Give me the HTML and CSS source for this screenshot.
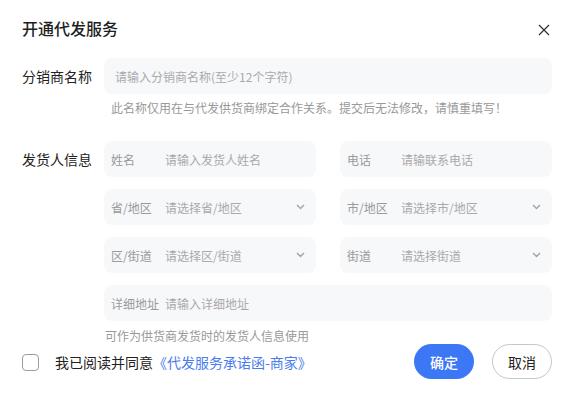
FILE: index.html
```html
<!DOCTYPE html>
<html lang="zh-CN">
<head>
<meta charset="utf-8">
<title>开通代发服务</title>
<link rel="stylesheet" href="styles.css">
</head>
<body>
<div class="dialog">
  <div class="header">
    <h1 class="title">开通代发服务</h1>
    <button class="close" aria-label="关闭">
      <svg width="12" height="12" viewBox="0 0 12 12"><path d="M1 1L11 11M11 1L1 11" stroke="#333" stroke-width="1.3" fill="none"/></svg>
    </button>
  </div>

  <div class="form-row">
    <div class="label">分销商名称</div>
    <div class="control">
      <div class="field field-name"><span class="placeholder">请输入分销商名称(至少12个字符)</span></div>
      <div class="hint hint-name">此名称仅用在与代发供货商绑定合作关系。提交后无法修改，请慎重填写！</div>
    </div>
  </div>

  <div class="form-row sender">
    <div class="label">发货人信息</div>
    <div class="control">
      <div class="grid">
        <div class="field"><span class="prefix">姓名</span><span class="placeholder">请输入发货人姓名</span></div>
        <div class="field"><span class="prefix">电话</span><span class="placeholder">请输联系电话</span></div>
        <div class="field select"><span class="prefix">省/地区</span><span class="placeholder">请选择省/地区</span><svg class="chev" width="9" height="6" viewBox="0 0 9 6"><path d="M1 1L4.5 4.5L8 1" stroke="#a6a6a6" stroke-width="1.5" fill="none"/></svg></div>
        <div class="field select"><span class="prefix">市/地区</span><span class="placeholder">请选择市/地区</span><svg class="chev" width="9" height="6" viewBox="0 0 9 6"><path d="M1 1L4.5 4.5L8 1" stroke="#a6a6a6" stroke-width="1.5" fill="none"/></svg></div>
        <div class="field select"><span class="prefix">区/街道</span><span class="placeholder">请选择区/街道</span><svg class="chev" width="9" height="6" viewBox="0 0 9 6"><path d="M1 1L4.5 4.5L8 1" stroke="#a6a6a6" stroke-width="1.5" fill="none"/></svg></div>
        <div class="field select"><span class="prefix">街道</span><span class="placeholder">请选择街道</span><svg class="chev" width="9" height="6" viewBox="0 0 9 6"><path d="M1 1L4.5 4.5L8 1" stroke="#a6a6a6" stroke-width="1.5" fill="none"/></svg></div>
        <div class="field wide"><span class="prefix">详细地址</span><span class="placeholder">请输入详细地址</span></div>
      </div>
      <div class="hint hint-addr">可作为供货商发货时的发货人信息使用</div>
    </div>
  </div>

  <div class="footer">
    <label class="agree">
      <span class="checkbox"></span>
      <span class="agree-text">我已阅读并同意<a class="link">《代发服务承诺函-商家》</a></span>
    </label>
    <div class="actions">
      <button class="btn btn-primary">确定</button>
      <button class="btn btn-default">取消</button>
    </div>
  </div>
</div>
</body>
</html>
```

FILE: styles.css
```css
* { box-sizing: border-box; }
html, body {
  margin: 0;
  padding: 0;
  background: #fff;
}
body {
  font-family: "PingFang SC", "Noto Sans CJK SC", "Noto Sans", sans-serif;
  color: #222;
  width: 576px;
  height: 408px;
  overflow: hidden;
}
.dialog {
  padding: 16px 24px 0 22px;
}
.header {
  display: flex;
  align-items: center;
  justify-content: space-between;
  height: 24px;
}
.title {
  margin: 0;
  font-size: 16px;
  font-weight: 500;
  line-height: 24px;
  color: #1f1f1f;
}
.close {
  border: 0;
  background: none;
  padding: 0;
  width: 12px;
  height: 12px;
  margin-right: 2px;
  margin-top: 3px;
  display: flex;
}
.form-row {
  display: flex;
  margin-top: 18px;
}
.form-row.sender {
  margin-top: 24px;
}
.label {
  width: 82px;
  flex: none;
  font-size: 14px;
  line-height: 36px;
  color: #222;
}
.control {
  flex: 1;
}
.field {
  height: 36px;
  background: #f7f8fa;
  border-radius: 8px;
  display: flex;
  align-items: center;
  padding: 0 11px 0 7px;
  font-size: 12px;
}
.field-name {
  padding-left: 11px;
}
.placeholder {
  color: #aaa;
  flex: 1;
}
.prefix {
  color: #9a9a9a;
  width: 54px;
  flex: none;
}
.chev {
  flex: none;
}
.grid {
  display: grid;
  grid-template-columns: 1fr 1fr;
  column-gap: 24px;
  row-gap: 12px;
}
.wide {
  grid-column: 1 / span 2;
}
.hint {
  font-size: 12px;
  color: #999;
}
.hint-name {
  margin-top: 5px;
  line-height: 18px;
  padding-left: 7px;
}
.hint-addr {
  margin-top: 7px;
  line-height: 16px;
  padding-left: 1px;
}
.footer {
  display: flex;
  align-items: center;
  justify-content: space-between;
  height: 35px;
}
.agree {
  display: flex;
  align-items: center;
  font-size: 14px;
}
.checkbox {
  width: 17px;
  height: 17px;
  border: 1px solid #9c9c9c;
  border-radius: 4px;
  background: #fff;
  margin-right: 16px;
  margin-top: 1px;
}
.agree-text {
  color: #222;
}
.link {
  color: #4a7bef;
}
.actions {
  display: flex;
  gap: 18px;
}
.btn {
  height: 35px;
  width: 60px;
  border-radius: 18px;
  font-family: inherit;
  font-size: 14px;
  padding: 0;
}
.btn-primary {
  background: #3c77f6;
  border: 0;
  color: #fff;
  font-weight: 500;
}
.btn-default {
  background: #fff;
  border: 1px solid #c6c6c6;
  color: #222;
}
```
